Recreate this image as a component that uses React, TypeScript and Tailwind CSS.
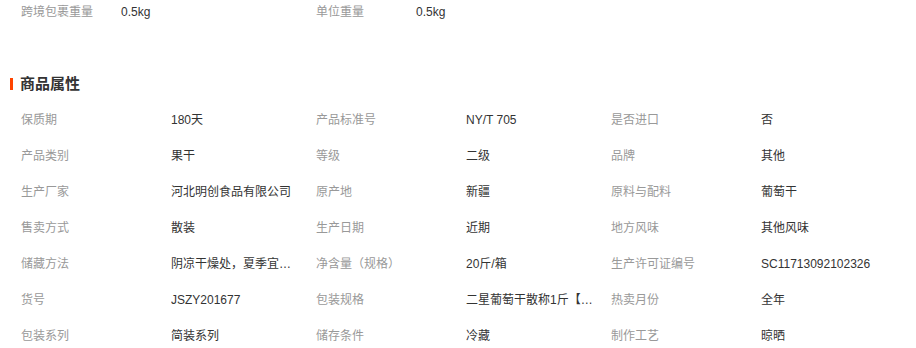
const font = {
  fontFamily: '"Liberation Sans", "Noto Sans CJK SC", sans-serif',
}

const rows: [string, string][][] = [
  [['保质期', '180天'], ['产品标准号', 'NY/T 705'], ['是否进口', '否']],
  [['产品类别', '果干'], ['等级', '二级'], ['品牌', '其他']],
  [['生产厂家', '河北明创食品有限公司'], ['原产地', '新疆'], ['原料与配料', '葡萄干']],
  [['售卖方式', '散装'], ['生产日期', '近期'], ['地方风味', '其他风味']],
  [['储藏方法', '阴凉干燥处，夏季宜冷藏保存'], ['净含量（规格）', '20斤/箱'], ['生产许可证编号', 'SC11713092102326']],
  [['货号', 'JSZY201677'], ['包装规格', '二星葡萄干散称1斤【20斤/箱】'], ['热卖月份', '全年']],
  [['包装系列', '简装系列'], ['储存条件', '冷藏'], ['制作工艺', '晾晒']],
]

export default function App() {
  return (
    <div className="w-[916px] h-[348px] bg-white overflow-hidden text-xs" style={font}>
      <div className="flex h-6 items-center pl-[21px]">
        <span className="w-[100px] text-[#999]">跨境包裹重量</span>
        <span className="w-[195px] text-[#333]">0.5kg</span>
        <span className="w-[100px] text-[#999]">单位重量</span>
        <span className="text-[#333]">0.5kg</span>
      </div>

      <div className="mt-12 flex h-6 items-center pl-[10px]">
        <span className="mr-[7px] h-3 w-[3px] bg-[#ff4400]" />
        <h2 className="text-[15px] font-bold text-[#333]">商品属性</h2>
      </div>

      <div className="mt-[6px] pl-[21px]">
        {rows.map((row, i) => (
          <div key={i} className="flex h-9 items-center">
            {row.map(([label, value]) => (
              <div key={label} className="flex w-[295px]">
                <span className="w-[150px] text-[#999]">{label}</span>
                <span className="w-[128px] truncate text-[#333]">{value}</span>
              </div>
            ))}
          </div>
        ))}
      </div>
    </div>
  )
}
